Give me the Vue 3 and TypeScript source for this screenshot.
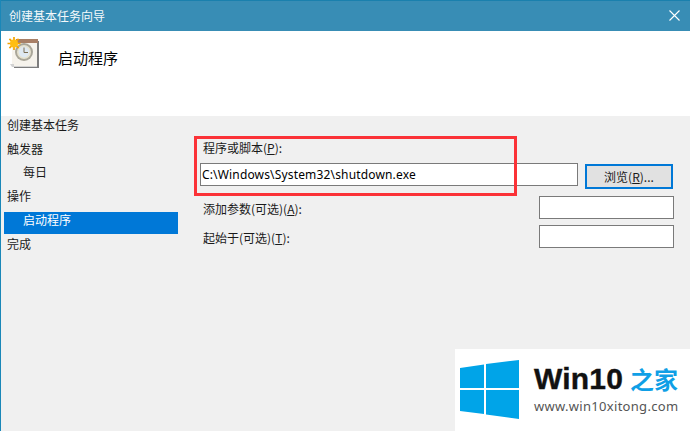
<script setup lang="ts">
interface Step { label: string; sub?: boolean; active?: boolean }
const steps: Step[] = [
  { label: '创建基本任务' },
  { label: '触发器' },
  { label: '每日', sub: true },
  { label: '操作' },
  { label: '启动程序', sub: true, active: true },
  { label: '完成' },
]
</script>

<template>
  <div class="window">
    <div class="titlebar">
      <span class="title">创建基本任务向导</span>
      <svg class="close" width="11" height="11" viewBox="0 0 11 11">
        <path d="M0.5 0.5L10.5 10.5M10.5 0.5L0.5 10.5" stroke="#fff" stroke-width="1.1" fill="none" />
      </svg>
    </div>
    <div class="head">
      <svg class="task-icon" width="32" height="32" viewBox="0 0 32 32">
        <rect x="7" y="4" width="25" height="27" fill="#7d7d7d" />
        <rect x="5" y="3" width="25" height="26" fill="#f6f3ec" />
        <path d="M3 27H7V29H30V30H5Z" fill="#d2d2d2" />
        <rect x="9" y="2" width="22" height="4" fill="#a87f66" />
        <circle cx="17" cy="15" r="9" fill="#a9a699" />
        <circle cx="17" cy="15" r="7" fill="#e6e2cf" />
        <circle cx="17" cy="15" r="5.4" fill="#dfe9f1" />
        <path d="M17 10.5V15.5H21" stroke="#7a6d52" stroke-width="1" fill="none" />
        <g stroke="#f5a300" stroke-width="1.7">
          <path d="M7 0V13M0.5 6.5H13.5M2.4 1.9L11.6 11.1M11.6 1.9L2.4 11.1" />
        </g>
        <circle cx="7" cy="6.5" r="4" fill="#ffbe12" />
      </svg>
      <span class="head-text">启动程序</span>
    </div>
    <div class="body">
      <nav class="steps">
        <div
          v-for="s in steps"
          :key="s.label"
          class="step"
          :class="{ sub: s.sub, active: s.active }"
        >{{ s.label }}</div>
      </nav>
      <div class="form">
        <div class="label first">程序或脚本(<u>P</u>):</div>
        <div class="row">
          <div class="input wide">C:\Windows\System32\shutdown.exe</div>
          <button class="browse">浏览(<u>R</u>)...</button>
        </div>
        <div class="row opt one">
          <span class="label">添加参数(可选)(<u>A</u>):</span>
          <div class="input small"></div>
        </div>
        <div class="row opt two">
          <span class="label">起始于(可选)(<u>T</u>):</span>
          <div class="input small"></div>
        </div>
      </div>
    </div>

    <div class="redbox"></div>

    <div class="logo">
      <svg width="60" height="60" viewBox="0 0 60 60" class="winlogo">
        <path d="M0 8L24 4.5V28H0Z M26 4L59 0V28H26Z M0 30H24V54L0 51Z M26 30H59V59L26 54.5Z" fill="#00a4e8" />
      </svg>
      <div class="logo-text">
        <div class="brand"><span class="w10">Win10</span><span class="zj">之家</span></div>
        <div class="url">www.win10xitong.com</div>
      </div>
    </div>
  </div>
</template>

<style>
html, body { margin: 0; padding: 0; background: #f0f0f0; }
</style>

<style scoped>
.window {
  position: relative;
  width: 690px;
  height: 431px;
  overflow: hidden;
  box-sizing: border-box;
  border-left: 1px solid #1a87b8;
  background: #f0f0f0;
  font-family: "Noto Sans CJK SC", "Noto Sans", sans-serif;
  font-size: 12px;
  color: #1a1a1a;
}
.titlebar {
  height: 31px;
  box-sizing: border-box;
  border-top: 1px solid #1a80ad;
  margin-left: -1px;
  background: #388db5;
  display: flex;
  align-items: center;
  justify-content: space-between;
  padding: 0 10px 0 9px;
  color: #fff;
}
.title { font-size: 12px; line-height: 28px; margin-top: -1px; opacity: .95; }
.close { display: block; margin-top: -1px; }
.head {
  height: 85px;
  background: #fff;
  display: flex;
  align-items: flex-start;
  position: relative;
}
.task-icon { margin: 6px 0 0 6px; flex: none; }
.head-text {
  margin: 15px 0 0 19px;
  font-size: 15px;
  line-height: 24px;
  color: #000;
}
.body { display: flex; height: 315px; }
.steps { width: 177px; box-sizing: border-box; flex: none; padding: 0 0 0 3px; }
.step {
  height: 24px;
  line-height: 18px;
  padding-left: 3px;
}
.step.sub { padding-left: 19px; }
.step.active {
  height: 22px;
  line-height: 16px;
  margin: 1px 0;
  background: #0078d7;
  color: #fff;
}
.step:nth-child(2) { height: 23px; }
.form { flex: 1; padding-left: 22px; min-width: 0; }
.label { line-height: 18px; white-space: nowrap; }
.label.first { margin: 23px 0 0 3px; }
.row { display: flex; align-items: flex-start; }
.row:nth-child(2) { margin-top: 6px; }
.input {
  box-sizing: border-box;
  height: 23px;
  background: #fff;
  border: 1px solid #7a7a7a;
  line-height: 21px;
  padding-left: 1px;
  color: #000;
  font-family: "Noto Sans", "Noto Sans CJK SC", sans-serif;
  font-size: 12px;
  letter-spacing: .16px;
}
.wide { width: 378px; }
.browse {
  margin: 1px 0 0 7px;
  width: 88px;
  height: 25px;
  box-sizing: border-box;
  border: 2px solid #0078d7;
  background: #e1e1e1;
  font: inherit;
  color: #1a1a1a;
  padding: 0;
  line-height: 18px;
}
.opt { justify-content: space-between; width: 474px; }
.opt .label { margin: 4px 0 0 3px; }
.one { margin-top: 7px; }
.two { margin-top: 6px; }
.small { width: 135px; }
.redbox {
  position: absolute;
  left: 193px;
  top: 136px;
  width: 323px;
  height: 60px;
  box-sizing: border-box;
  border: 3px solid #fb3237;
  pointer-events: none;
}
.logo {
  position: absolute;
  left: 454px;
  top: 349px;
  width: 236px;
  height: 82px;
  background: #fff;
}
.winlogo { position: absolute; left: 5px; top: 11px; }
.logo-text { position: absolute; left: 79px; top: 14px; white-space: nowrap; }
.brand { line-height: 32px; height: 32px; display: flex; align-items: center; }
.w10 {
  font-family: "Liberation Sans", Arial, sans-serif;
  font-weight: 700;
  font-size: 30px;
  letter-spacing: .2px;
  -webkit-text-stroke: .4px #111;
  color: #111;
  width: 96px;
}
.zj {
  font-family: "Noto Sans CJK SC", sans-serif;
  font-weight: 700;
  font-size: 24px;
  color: #0f9fe6;
}
.url {
  font-family: "Noto Sans", sans-serif;
  font-size: 13px;
  letter-spacing: .3px;
  color: #555;
  line-height: 14px;
  margin-top: 4px;
}
</style>
